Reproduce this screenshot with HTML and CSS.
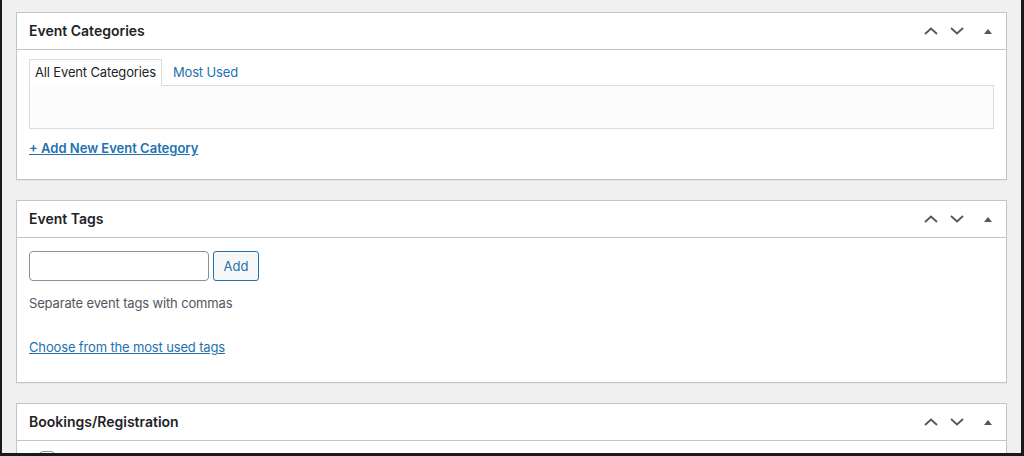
FILE: index.html
```html
<!DOCTYPE html>
<html>
<head>
<meta charset="utf-8">
<link rel="stylesheet" href="styles.css">
</head>
<body>
<div class="frame">
  <div class="postbox">
    <div class="postbox-header">
      <h2>Event Categories</h2>
      <div class="handles">
        <span class="handle up"><svg width="14" height="8" viewBox="0 0 14 8"><polyline points="1,7 7,1.5 13,7" fill="none" stroke="#50575e" stroke-width="1.8"/></svg></span>
        <span class="handle down"><svg width="14" height="8" viewBox="0 0 14 8"><polyline points="1,1 7,6.5 13,1" fill="none" stroke="#50575e" stroke-width="1.8"/></svg></span>
        <span class="handle toggle"><svg width="8" height="5" viewBox="0 0 8 5"><polygon points="0,5 4,0 8,5" fill="#50575e"/></svg></span>
      </div>
    </div>
    <div class="inside cat-inside">
      <ul class="tabs">
        <li class="tab active">All Event Categories</li>
        <li class="tab"><a href="#">Most Used</a></li>
      </ul>
      <div class="tab-panel"></div>
      <a href="#" class="add-cat">+ Add New Event Category</a>
    </div>
  </div>

  <div class="postbox">
    <div class="postbox-header">
      <h2>Event Tags</h2>
      <div class="handles">
        <span class="handle up"><svg width="14" height="8" viewBox="0 0 14 8"><polyline points="1,7 7,1.5 13,7" fill="none" stroke="#50575e" stroke-width="1.8"/></svg></span>
        <span class="handle down"><svg width="14" height="8" viewBox="0 0 14 8"><polyline points="1,1 7,6.5 13,1" fill="none" stroke="#50575e" stroke-width="1.8"/></svg></span>
        <span class="handle toggle"><svg width="8" height="5" viewBox="0 0 8 5"><polygon points="0,5 4,0 8,5" fill="#50575e"/></svg></span>
      </div>
    </div>
    <div class="inside tag-inside">
      <div class="tag-row">
        <input type="text" class="tag-input">
        <button class="btn">Add</button>
      </div>
      <p class="howto">Separate event tags with commas</p>
      <a href="#" class="choose">Choose from the most used tags</a>
    </div>
  </div>

  <div class="postbox">
    <div class="postbox-header">
      <h2>Bookings/Registration</h2>
      <div class="handles">
        <span class="handle up"><svg width="14" height="8" viewBox="0 0 14 8"><polyline points="1,7 7,1.5 13,7" fill="none" stroke="#50575e" stroke-width="1.8"/></svg></span>
        <span class="handle down"><svg width="14" height="8" viewBox="0 0 14 8"><polyline points="1,1 7,6.5 13,1" fill="none" stroke="#50575e" stroke-width="1.8"/></svg></span>
        <span class="handle toggle"><svg width="8" height="5" viewBox="0 0 8 5"><polygon points="0,5 4,0 8,5" fill="#50575e"/></svg></span>
      </div>
    </div>
    <div class="inside book-inside">
      <span class="checkbox"></span>
    </div>
  </div>
</div>
</body>
</html>
```

FILE: styles.css
```css
* { box-sizing: border-box; }
html, body { margin: 0; padding: 0; background: #1a1a1a; }
body {
  font-family: Inter, "Liberation Sans", sans-serif;
  font-size: 13px;
  color: #1d2327;
  letter-spacing: -0.15px;
}
.frame {
  width: 1024px;
  height: 456px;
  overflow: hidden;
  background: #f0f0f1;
  border-left: 2px solid #1a1a1a;
  border-right: 3px solid #1a1a1a;
  border-bottom: 3px solid #1a1a1a;
  padding: 12px 14px 0 14px;
}
.postbox {
  background: #fff;
  border: 1px solid #c3c4c7;
  margin-bottom: 20px;
  box-shadow: 0 1px 1px rgba(0,0,0,0.04);
}
.postbox-header {
  height: 37px;
  border-bottom: 1px solid #c3c4c7;
  display: flex;
  align-items: center;
  justify-content: space-between;
}
.postbox-header h2 {
  margin: 0;
  padding: 0 12px;
  font-size: 14px;
  font-weight: 600;
  line-height: 20px;
  letter-spacing: 0;
  color: #1d2327;
}
.handles { display: flex; height: 36px; align-items: center; }
.handle { display: flex; align-items: center; justify-content: center; height: 36px; width: 26px; }
.handle.toggle { width: 36px; }
.inside { padding: 0 12px; }
.cat-inside { padding-top: 9px; padding-bottom: 21px; }
.tabs { list-style: none; margin: 0; padding: 0; display: flex; align-items: flex-end; }
.tab {
  height: 27px;
  line-height: 24px;
  padding: 0 5px;
  margin-right: 5px;
  border: 1px solid transparent;
  border-bottom: 0;
  margin-bottom: -1px;
  position: relative;
}
.tab.active {
  border-color: #dcdcde;
  background: #fff;
  color: #1d2327;
}
.tab a { color: #2271b1; text-decoration: none; }
.tab-panel {
  height: 44px;
  border: 1px solid #dcdcde;
  background: #fcfcfc;
}
.add-cat {
  display: inline-block;
  margin-top: 9px;
  line-height: 20px;
  font-weight: 600;
  letter-spacing: 0;
  color: #2271b1;
  text-decoration: underline;
}
.tag-inside { padding-top: 13px; padding-bottom: 25px; }
.tag-row { display: flex; gap: 4px; height: 30px; }
.tag-input {
  width: 180px;
  height: 30px;
  border: 1px solid #8c8f94;
  border-radius: 4px;
  background: #fff;
  margin: 0;
  padding: 0 8px;
}
.btn {
  height: 30px;
  width: 46px;
  margin: 0;
  padding: 0;
  border: 1px solid #2271b1;
  border-radius: 3px;
  background: #f6f7f7;
  color: #2271b1;
  font-family: inherit;
  font-size: 13px;
}
.howto {
  margin: 12px 0 0;
  line-height: 20px;
  color: #50575e;
}
.choose {
  display: inline-block;
  margin-top: 24px;
  line-height: 20px;
  color: #2271b1;
  text-decoration: underline;
}
.book-inside { padding-top: 10px; padding-left: 22px; }
.checkbox {
  display: block;
  width: 16px;
  height: 16px;
  border: 1px solid #8c8f94;
  border-radius: 4px;
  background: #fff;
}
```
